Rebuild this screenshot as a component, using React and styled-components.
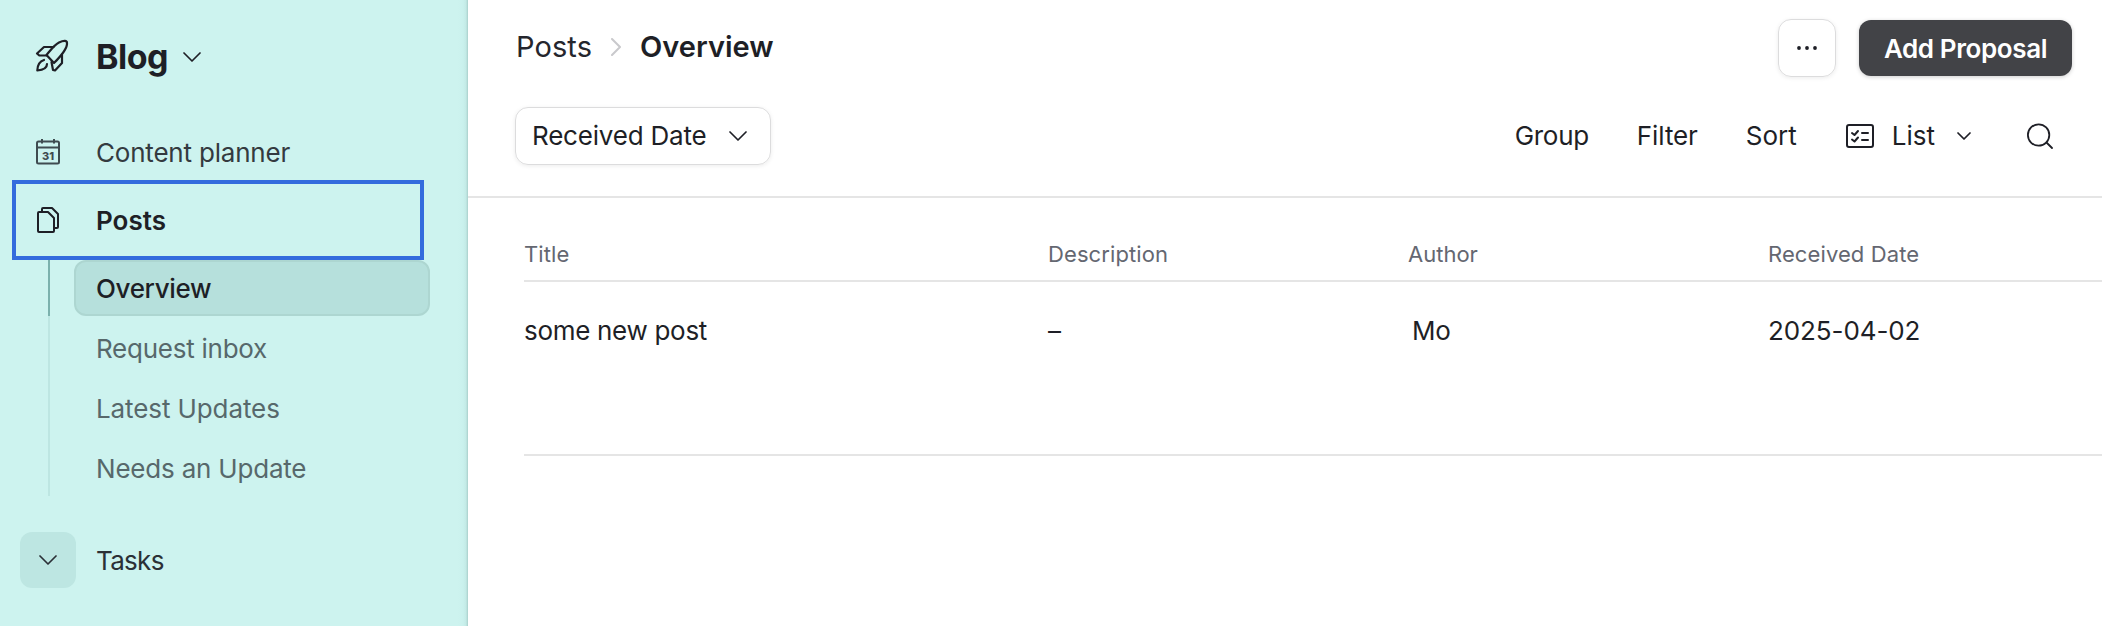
import React from "react";
import styled, { createGlobalStyle } from "styled-components";

const Global = createGlobalStyle`
  *, *::before, *::after { box-sizing: border-box; }
  body { margin: 0; background: #fff; overflow: hidden; }
  svg { display: block; flex: none; }
`;

const Shell = styled.div`
  display: flex;
  width: 2102px;
  height: 626px;
  overflow: hidden;
  font-family: Inter, "Liberation Sans", sans-serif;
  font-size: 26px;
  line-height: 40px;
  color: #1e1f26;
  white-space: nowrap;
`;

const Label = styled.span`
  letter-spacing: ${(p) => p.$track || 0}px;
`;

const LoweredLabel = styled(Label)`
  padding-top: 2px;
`;

const Sidebar = styled.aside`
  width: 468px;
  flex: none;
  background: linear-gradient(to left, #a9cfcb 0, #c3eae6 2px, #caf1ed 5px, #cdf3ef 10px);
`;

const Workspace = styled.div`
  display: flex;
  align-items: center;
  height: 114px;
  margin-bottom: 10px;
  padding-left: 35px;
`;

const WorkspaceIcon = styled.span`
  margin-bottom: 2px;
`;

const WorkspaceName = styled.span`
  width: 74px;
  margin: 0 13px 0 27px;
  font-size: 34px;
  font-weight: 700;
  letter-spacing: -0.5px;
`;

const NavItem = styled.div`
  display: flex;
  align-items: center;
  height: 56px;
  padding-left: 34px;
  color: #343a40;
`;

const ActiveItem = styled(NavItem)`
  width: 412px;
  height: 80px;
  margin-left: 12px;
  padding-left: 18px;
  border: 4px solid #336bdd;
  color: #1e1f26;
  font-weight: 600;
`;

const IconSlot = styled.span`
  display: flex;
  justify-content: center;
  width: 28px;
  margin-right: 34px;
`;

const SubList = styled.div`
  display: flex;
  flex-direction: column;
  margin-bottom: 36px;
`;

const SubItem = styled.div`
  display: flex;
  align-items: center;
  height: ${(p) => (p.$active ? 56 : 60)}px;
  margin-left: 48px;
  padding-top: ${(p) => (p.$active ? 0 : 4)}px;
  padding-left: ${(p) => (p.$active ? 24 : 46)}px;
  border-left: 2px solid ${(p) => (p.$active ? "#7bb1ad" : "#bde6e2")};
  color: #57686b;
`;

const ActivePill = styled.span`
  display: flex;
  align-items: center;
  width: 356px;
  height: 56px;
  padding-left: 20px;
  border: 2px solid #add6d1;
  border-radius: 12px;
  background: #b6e0dc;
  color: #1e1f26;
  font-weight: 500;
`;

const GroupRow = styled.div`
  display: flex;
  align-items: center;
  gap: 20px;
  height: 56px;
  padding-left: 20px;
  color: #2b3036;
`;

const ToggleButton = styled.span`
  display: flex;
  align-items: center;
  justify-content: center;
  width: 56px;
  height: 56px;
  border-radius: 12px;
  background: #bde6e2;
`;

const Main = styled.main`
  flex: 1;
  min-width: 0;
`;

const Header = styled.header`
  height: 198px;
  border-bottom: 2px solid #e5e5e5;
`;

const TitleBar = styled.div`
  display: flex;
  align-items: center;
  height: 96px;
  padding: 0 30px 0 48px;
`;

const Breadcrumbs = styled.nav`
  display: flex;
  align-items: center;
  gap: 19px;
  margin-bottom: 2px;
  font-size: 29px;
  color: #25262d;
`;

const Current = styled(Label)`
  font-weight: 600;
  color: #1e1f26;
`;

const Separator = styled.span`
  color: #c9c9cc;
`;

const Spacer = styled.span`
  flex: 1;
`;

const Outlined = styled.span`
  display: flex;
  align-items: center;
  height: 58px;
  border: 1px solid #dcdcdd;
  border-radius: 13px;
  box-shadow: 0 1px 4px rgba(0, 0, 0, 0.08);
`;

const MoreButton = styled(Outlined)`
  justify-content: center;
  width: 58px;
  margin-right: 23px;
`;

const PrimaryButton = styled.span`
  display: flex;
  align-items: center;
  justify-content: center;
  width: 213px;
  height: 56px;
  border-radius: 12px;
  background: #424347;
  box-shadow: 0 1px 4px rgba(0, 0, 0, 0.2);
  color: #fff;
  font-weight: 600;
`;

const Toolbar = styled.div`
  display: flex;
  align-items: center;
  height: 80px;
  padding: 0 49px 0 47px;
`;

const DateSelect = styled(Outlined)`
  justify-content: space-between;
  width: 256px;
  padding: 0 23px 0 16px;
`;

const ToolLabel = styled(Label)`
  margin-right: 48px;
`;

const ViewSwitch = styled.span`
  display: flex;
  align-items: center;
  margin: 0 56px 0 1px;
`;

const ViewName = styled(Label)`
  margin: 0 22px 0 18px;
`;

const Table = styled.div`
  margin-left: 56px;
`;

const Row = styled.div`
  display: grid;
  grid-template-columns: 524px 360px 360px 1fr;
  border-bottom: 2px solid #e5e5e5;
`;

const HeadRow = styled(Row)`
  height: 84px;
  padding-top: 36px;
  font-size: 22px;
  color: #646771;
`;

const BodyRow = styled(Row)`
  height: 174px;
  padding-top: 29px;
`;

const Person = styled(Label)`
  padding-left: 4px;
`;

const Svg = ({ w, h, sw = 2, children }) => (
  <svg width={w} height={h} viewBox={`0 0 ${w} ${h}`} fill="none" stroke="currentColor" strokeWidth={sw} strokeLinecap="round" strokeLinejoin="round">
    {children}
  </svg>
);

const Chevron = ({ w = 18, h = 10 }) => (
  <Svg w={w} h={h} sw={1.7}>
    <path d={`M1 1 ${w / 2} ${h - 1} ${w - 1} 1`} />
  </Svg>
);

const ChevronRight = () => (
  <Svg w={10} h={18}>
    <path d="M1 1 9 9 1 17" />
  </Svg>
);

const Rocket = () => (
  <Svg w={34} h={34} sw={2.2}>
    <path d="M11.500 16C15 12 19 6 24 3.500 29 1.200 32 1.500 32 4 32.500 9 27 16 19 24Z" />
    <path d="M18.500 8H9L2 14.500 4 16.300 11.500 16.500" />
    <path d="M27 15.500V24L20 31.500 18 31 16.500 23" />
    <path d="M9 21C4 22.500 2.500 26 2.300 31.500 8 31 12 29.500 12 25" />
  </Svg>
);

const Calendar = () => (
  <svg width="24" height="26" viewBox="0 0 24 26" fill="none" stroke="#3f4b50" strokeWidth="2">
    <rect x="1" y="2.500" width="22" height="22" rx="1.500" />
    <path d="M1 8.500H23M6 0V4.500M18 0V4.500" />
    <text x="12" y="20.500" textAnchor="middle" fontSize="11" fontWeight="800" fill="#3f4b50" stroke="none">31</text>
  </svg>
);

const Pages = () => (
  <Svg w={24} h={26}>
    <path d="M3 5H12L18 11V24Q18 25 17 25H3Q2 25 2 24V6Q2 5 3 5Z" />
    <path d="M6 5V2Q6 1 7 1H16L22 7V20Q22 21 21 21H18.500" />
  </Svg>
);

const Checklist = () => (
  <Svg w={28} h={24}>
    <rect x="1" y="1" width="26" height="22" rx="2" />
    <path d="M6 9 8.500 11 12 7M6 15.500 8.500 17.500 12 13.500M16 9H22M16 16H22" />
  </Svg>
);

const Search = () => (
  <Svg w={26} h={26} sw={1.8}>
    <circle cx="11.600" cy="12" r="10.700" />
    <path d="M19.500 19.500 25 25" />
  </Svg>
);

const Dots = () => (
  <svg width="22" height="6" viewBox="0 0 22 6" fill="currentColor">
    <circle cx="3" cy="3" r="1.900" />
    <circle cx="11" cy="3" r="1.900" />
    <circle cx="19" cy="3" r="1.900" />
  </svg>
);

export default function App() {
  return (
    <>
      <Global />
      <Shell>
        <Sidebar>
          <Workspace>
            <WorkspaceIcon><Rocket /></WorkspaceIcon>
            <WorkspaceName>Blog</WorkspaceName>
            <Chevron />
          </Workspace>
          <NavItem>
            <IconSlot><Calendar /></IconSlot>
            <LoweredLabel $track={-0.2}>Content planner</LoweredLabel>
          </NavItem>
          <ActiveItem>
            <IconSlot><Pages /></IconSlot>
            <LoweredLabel>Posts</LoweredLabel>
          </ActiveItem>
          <SubList>
            <SubItem $active>
              <ActivePill><LoweredLabel $track={-0.35}>Overview</LoweredLabel></ActivePill>
            </SubItem>
            <SubItem><LoweredLabel $track={-0.25}>Request inbox</LoweredLabel></SubItem>
            <SubItem><LoweredLabel $track={-0.1}>Latest Updates</LoweredLabel></SubItem>
            <SubItem><LoweredLabel $track={-0.2}>Needs an Update</LoweredLabel></SubItem>
          </SubList>
          <GroupRow>
            <ToggleButton><Chevron /></ToggleButton>
            <LoweredLabel $track={-0.7}>Tasks</LoweredLabel>
          </GroupRow>
        </Sidebar>
        <Main>
          <Header>
            <TitleBar>
              <Breadcrumbs>
                <Label $track={0.1}>Posts</Label>
                <Separator><ChevronRight /></Separator>
                <Current>Overview</Current>
              </Breadcrumbs>
              <Spacer />
              <MoreButton><Dots /></MoreButton>
              <PrimaryButton><LoweredLabel $track={-0.4}>Add Proposal</LoweredLabel></PrimaryButton>
            </TitleBar>
            <Toolbar>
              <DateSelect><Label $track={-0.2}>Received Date</Label><Chevron /></DateSelect>
              <Spacer />
              <ToolLabel $track={-0.3}>Group</ToolLabel>
              <ToolLabel $track={-0.1}>Filter</ToolLabel>
              <ToolLabel>Sort</ToolLabel>
              <ViewSwitch>
                <Checklist />
                <ViewName>List</ViewName>
                <Chevron w={14} h={8} />
              </ViewSwitch>
              <Search />
            </Toolbar>
          </Header>
          <Table>
            <HeadRow>
              <Label $track={0.1}>Title</Label>
              <Label $track={0.1}>Description</Label>
              <Label>Author</Label>
              <Label $track={0.1}>Received Date</Label>
            </HeadRow>
            <BodyRow>
              <Label $track={-0.3}>some new post</Label>
              <Label>–</Label>
              <Person $track={-0.3}>Mo</Person>
              <Label $track={-0.1}>2025-04-02</Label>
            </BodyRow>
          </Table>
        </Main>
      </Shell>
    </>
  );
}
